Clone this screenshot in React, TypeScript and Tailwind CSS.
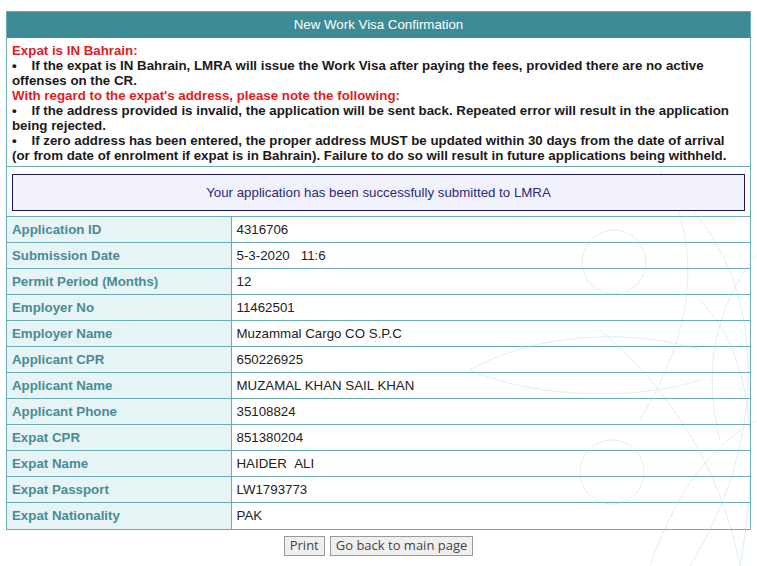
import React from "react";

const rows: [string, string][] = [
  ["Application ID", "4316706"],
  ["Submission Date", "5-3-2020\u00a0\u00a0\u00a011:6"],
  ["Permit Period (Months)", "12"],
  ["Employer No", "11462501"],
  ["Employer Name", "Muzammal Cargo CO S.P.C"],
  ["Applicant CPR", "650226925"],
  ["Applicant Name", "MUZAMAL KHAN SAIL KHAN"],
  ["Applicant Phone", "35108824"],
  ["Expat CPR", "851380204"],
  ["Expat Name", "HAIDER\u00a0\u00a0ALI"],
  ["Expat Passport", "LW1793773"],
  ["Expat Nationality", "PAK"],
];

function Watermark() {
  return (
    <svg
      className="pointer-events-none absolute left-0 top-0"
      width="757"
      height="566"
      viewBox="0 0 757 566"
      fill="none"
      stroke="#dcf0f2"
      strokeWidth="1"
    >
      <circle cx="614" cy="262" r="32" />
      <circle cx="612" cy="472" r="32" />
      <path d="M470 370 C 540 330, 640 330, 700 350" />
      <path d="M470 370 C 540 400, 640 400, 700 380" />
      <path d="M660 170 C 700 240, 700 320, 640 420" />
      <path d="M670 190 C 760 260, 780 420, 690 566" />
      <path d="M700 300 C 760 360, 757 470, 740 566" />
      <path d="M600 330 C 660 380, 720 460, 740 566" />
      <path d="M650 566 C 680 480, 720 440, 757 420" />
      <path d="M760 250 C 720 300, 700 360, 720 440" />
    </svg>
  );
}

export default function App() {
  return (
    <div className="relative h-[566px] w-[757px] bg-white font-['Liberation_Sans',Arial,sans-serif] text-[13.3px]">
      <Watermark />
      <div className="relative pl-[6px] pt-[11px]">
        <div className="w-[745px] border border-[#6aadb5]">
          {/* header */}
          <div className="flex h-[26px] items-center justify-center bg-[#3d8b94] text-white">
            New Work Visa Confirmation
          </div>

          {/* notes */}
          <div className="px-[5px] pb-[3px] pt-[5px] font-bold leading-[15px] text-[#1a1a1a]">
            <div className="text-[#e31b23]">Expat is IN Bahrain:</div>
            <div>
              •&nbsp;&nbsp;&nbsp; If the expat is IN Bahrain, LMRA will issue the Work Visa after paying the fees, provided there are no active offenses on the CR.
            </div>
            <div className="text-[#e31b23]">With regard to the expat's address, please note the following:</div>
            <div>
              •&nbsp;&nbsp;&nbsp; If the address provided is invalid, the application will be sent back. Repeated error will result in the application being rejected.
            </div>
            <div>
              •&nbsp;&nbsp;&nbsp; If zero address has been entered, the proper address MUST be updated within 30 days from the date of arrival (or from date of enrolment if expat is in Bahrain). Failure to do so will result in future applications being withheld.
            </div>
          </div>

          {/* success message */}
          <div className="border-t border-[#6aadb5] px-[5px] pb-[5px] pt-[7px]">
            <div className="flex h-[37px] items-center justify-center border border-[#1b1a55] bg-[#f2f2fd] text-[#2b2a75]">
              Your application has been successfully submitted to LMRA
            </div>
          </div>

          {/* details */}
          <table className="w-full border-collapse">
            <tbody>
              {rows.map(([label, value]) => (
                <tr key={label} className="h-[26px] border-t border-[#6aadb5]">
                  <td className="w-[224px] bg-[#e3f3f5]/90 px-[5px] font-bold text-[#4a8b95]">{label}</td>
                  <td className="border-l border-[#6aadb5] px-[5px] text-[#222]">{value}</td>
                </tr>
              ))}
            </tbody>
          </table>
        </div>

        {/* buttons */}
        <div className="mt-[6px] flex w-[745px] justify-center gap-[5px] font-['Open_Sans',sans-serif] text-[13px] text-[#444]">
          <button className="h-[20px] border border-[#9a9a9a] bg-[#efefef] px-[5px] leading-none">Print</button>
          <button className="h-[20px] border border-[#9a9a9a] bg-[#efefef] px-[5px] leading-none">Go back to main page</button>
        </div>
      </div>
    </div>
  );
}
